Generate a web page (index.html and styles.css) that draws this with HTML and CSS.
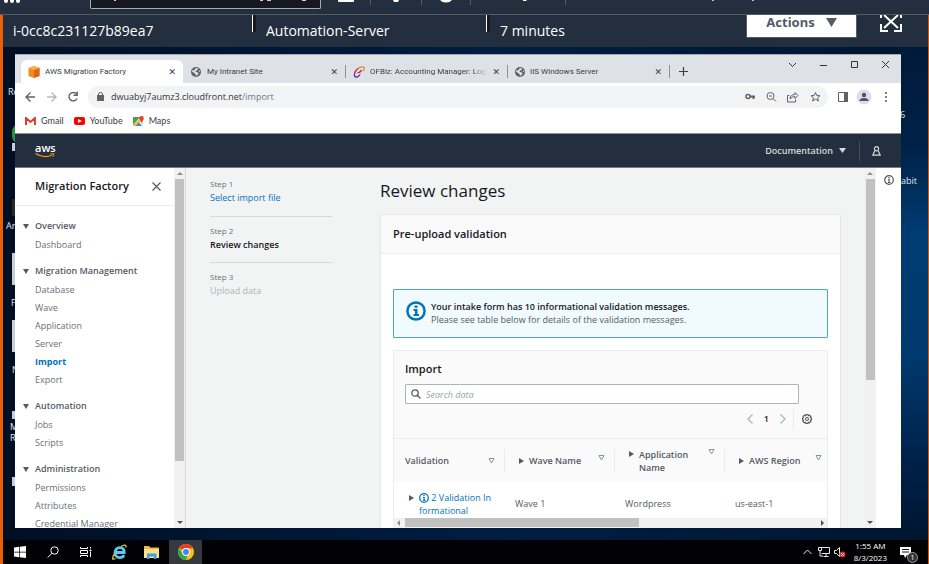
FILE: index.html
```
<!DOCTYPE html>
<html lang="en">
<head>
<meta charset="utf-8">
<title>AWS Migration Factory</title>
<link rel="stylesheet" href="styles.css">
</head>
<body>
<header class="console-nav">
  <svg class="nav-grid" width="18" height="4" viewBox="0 0 18 4"><path fill="#fff" d="M1 0h4v1a2 2 0 0 1-4 0zM7 0h4v1a2 2 0 0 1-4 0zM13 0h4v1a2 2 0 0 1-4 0z"/></svg>
  <div class="nav-search"><svg width="230" height="3" viewBox="0 0 230 3"><path fill="#c9d0d6" d="M23 0h2v1h-2zM169 0h3v1h-3zM176 0h4v1h-4zM211 0h4v1h-4z"/></svg></div>
  <svg class="nav-tools" width="240" height="14" viewBox="0 0 240 14"><path stroke="#545b64" d="M38.500 0v5M89.500 0v5M138.500 0v5M233.500 0v5"/><path fill="#fff" d="M6 0h16v1q0 1-1 1H7q-1 0-1-1zM61 0h6l-1 2h-4zM108 0h12q-2 2.500-6 2.500T108 0zM191 0h4l-1 1h-3z"/></svg>
  <svg class="nav-region" width="60" height="2" viewBox="0 0 60 2"><path fill="#b8c0c8" d="M2 0h2v1H2zM42 0h2v1h-2z"/></svg>
</header>
<main class="session">
  <section class="instance-bar">
    <div class="fact">i-0cc8c231127b89ea7</div>
    <div class="fact ruled">Automation-Server</div>
    <div class="fact ruled">7 minutes</div>
    <button class="actions">Actions <svg width="11" height="9" viewBox="0 0 11 9"><path fill="#545b64" d="M0 0h11L5.500 9z"/></svg></button>
    <button class="expand" aria-label="Full screen"><svg width="22" height="17" viewBox="0 0 22 17"><g stroke="#fff" stroke-width="2" fill="none"><path d="M4 0l14 13M18 0L4 13"/><path d="M1 0v3M21 0v3M1 9v7h7M21 9v7h-7"/></g></svg></button>
  </section>
  <section class="desktop">
    <div class="shortcut s1">Re</div><div class="shortcut s2">Ar</div><div class="shortcut s3">F</div><div class="shortcut s4">N</div><div class="shortcut s5">M<br>R</div>
    <i class="tile t0"></i><i class="tile t1"></i><i class="tile t2"></i><i class="tile t3"></i><i class="tile t4"></i><i class="tile t5"></i><i class="tile t6"></i>
    <div class="shortcut r1">6</div><div class="shortcut r2">abit</div>
    <div class="window">
      <div class="tabs">
        <div class="tab active"><svg width="12" height="12" viewBox="0 0 12 12"><path fill="#f58a1f" d="M6 0l5.500 2v8L6 12 .5 10V2z"/><path fill="#fbb04c" d="M6 0l5.500 2L6 4 .5 2z"/><path fill="#e0661b" d="M6 4l5.500-2v8L6 12z"/></svg><span>AWS Migration Factory</span><button aria-label="Close tab">✕</button></div>
        <div class="tab second"><svg width="10" height="10" viewBox="0 0 10 10"><circle cx="5" cy="5" r="5" fill="#5f6368"/><path fill="#dee1e6" d="M5 1l2 .3-.5 1.700-2 1 .5 1 2 .5.500 1.500L5 9 4.500 7 1 4.500 1.500 3l1.500.5zM8.500 3L9 5 7.500 4.500z"/></svg><span>My Intranet Site</span><button aria-label="Close tab">✕</button></div>
        <div class="tab ruled-tab"><svg width="12" height="12" viewBox="0 0 12 12" fill="none" stroke-width="1.300"><path stroke="#e8862e" d="M5 2.500Q8 0 11 1.200M11 1q.8 2-1 4"/><path stroke="#c32148" d="M5 2.500Q2 4.500 1.500 8M4.500 6.500q3 .5 4-2.500"/><path stroke="#5b2a86" d="M1.500 8q-.5 3.500 2.500 3 2-.5 3-2.500"/></svg><span class="fade">OFBiz: Accounting Manager: Log</span><button aria-label="Close tab">✕</button></div>
        <div class="tab ruled-tab"><svg width="10" height="10" viewBox="0 0 10 10"><circle cx="5" cy="5" r="5" fill="#5f6368"/><path fill="#dee1e6" d="M5 1l2 .3-.5 1.700-2 1 .5 1 2 .5.500 1.500L5 9 4.500 7 1 4.500 1.500 3l1.500.5zM8.500 3L9 5 7.500 4.500z"/></svg><span>IIS Windows Server</span><button aria-label="Close tab">✕</button></div>
        <div class="new-tab"><svg width="9" height="9" viewBox="0 0 9 9"><path stroke="#3c4043" stroke-width="1.200" d="M4.500 0v9M0 4.500h9"/></svg></div>
        <svg class="win-buttons" width="102" height="10" viewBox="0 0 102 10" fill="none" stroke="#333"><path d="M1 3l3.500 3.500L8 3M32 5.500h7M63.500 1.500h6v6h-6zM94 1l7 7M101 1l-7 7"/></svg>
      </div>
      <div class="toolbar">
        <svg width="56" height="12" viewBox="0 0 56 12" fill="none" stroke="#5f6368" stroke-width="1.400"><path d="M10 6H1M5.500 1.500L1 6l4.500 4.500"/><path stroke="#b5b8bb" d="M22 6h9M26.500 1.500L31 6l-4.500 4.500"/><path d="M51.500 3A4.200 4.200 0 1 0 52 7.500M52.200 .5v3.700h-3.700"/></svg>
        <div class="omnibox">
          <svg width="7" height="9" viewBox="0 0 7 9"><path fill="#5f6368" d="M0 3h7v6H0z"/><path fill="none" stroke="#5f6368" d="M1.500 3.500V2a2 1.500 0 0 1 4 0v1.500"/></svg>
          <span class="url">dwuabyj7aumz3.cloudfront.net<i>/import</i></span>
          <svg width="76" height="12" viewBox="0 0 76 12" fill="none" stroke="#5f6368"><circle cx="3" cy="5.500" r="2" stroke-width="1.500"/><path stroke-width="2" d="M5 5.500h5M8.500 5v3"/><circle cx="25.500" cy="5" r="3.500"/><path d="M28 7.500l3 3M24 5h3M44.500 4.500h-2v6.500h8V8.500M45 8c0-3 2-4.500 5-4.500V1.500L53 4.500l-3 3v-2q-3 0-5 2.500z"/><path d="M70.500 1.500l1.300 3 3.200.2-2.500 2.100.9 3.200-2.900-1.800L67.600 10l.9-3.200L66 4.700l3.200-.2z"/></svg>
        </div>
        <svg width="52" height="16" viewBox="0 0 52 16"><path fill="none" stroke="#5f6368" d="M.5 3.500h9v9h-9z"/><path fill="#5f6368" d="M6 3h4v10H6z"/><circle cx="26" cy="8" r="7.500" fill="#dfdbe7"/><circle cx="26" cy="6" r="2.200" fill="#4d5270"/><path fill="#4d5270" d="M21.500 12q0-3 4.500-3t4.500 3z"/><g fill="#5f6368"><circle cx="48" cy="4" r="1.100"/><circle cx="48" cy="8" r="1.100"/><circle cx="48" cy="12" r="1.100"/></g></svg>
      </div>
      <nav class="bookmarks">
        <a href="#"><svg width="11" height="8" viewBox="0 0 11 8"><path fill="none" stroke="#d9402f" stroke-width="2" d="M1 8V1l4.500 4L10 1v7"/></svg>Gmail</a>
        <a href="#"><svg width="11" height="8" viewBox="0 0 11 8"><rect width="11" height="8" rx="2" fill="#f00"/><path fill="#fff" d="M4 2l4 2-4 2z"/></svg>YouTube</a>
        <a href="#"><svg width="11" height="10" viewBox="0 0 11 10"><path fill="#34a853" d="M0 1h7L0 9z"/><path fill="#4285f4" d="M2 10l4-4 3 4z"/><path fill="#fbbc04" d="M0 9l6-6 1 2-5 5H0z"/><path fill="#dadce0" d="M7 5h3v5z"/><path fill="#ea4335" d="M8.500 0A2.300 2.300 0 0 1 10.500 3.500L8.500 7 6.500 3.500A2.300 2.300 0 0 1 8.500 0z"/></svg>Maps</a>
      </nav>
      <header class="aws-header">
        <a class="logo" href="#"><span>aws</span><svg width="20" height="5" viewBox="0 0 20 5" fill="none" stroke="#f90"><path stroke-width="1.300" d="M.5.500Q9 6 17 2"/><path d="M15.500.8h3.500q0 2-1.500 3.200"/></svg></a>
        <button class="docs">Documentation <svg width="7" height="5" viewBox="0 0 7 5"><path fill="#d5dbdb" d="M0 0h7L3.500 5z"/></svg></button>
        <button class="user" aria-label="User"><svg width="9" height="10" viewBox="0 0 9 10" fill="none" stroke="#d5dbdb" stroke-width="1.200"><circle cx="4.500" cy="2.800" r="2.100"/><path d="M2.800 4.800L.8 9.200h7.400l-2-4.400"/></svg></button>
      </header>
      <div class="app">
        <aside class="side">
          <div class="side-title"><h2>Migration Factory</h2><button aria-label="Close navigation"><svg width="9" height="9" viewBox="0 0 9 9"><path stroke="#545b64" stroke-width="1.200" d="M.5.500l8 8M8.500.500l-8 8"/></svg></button></div>
          <nav>
            <section><h3>Overview</h3><a href="#">Dashboard</a></section>
            <section><h3>Migration Management</h3><a href="#">Database</a><a href="#">Wave</a><a href="#">Application</a><a href="#">Server</a><a href="#" class="current">Import</a><a href="#">Export</a></section>
            <section><h3>Automation</h3><a href="#">Jobs</a><a href="#">Scripts</a></section>
            <section><h3>Administration</h3><a href="#">Permissions</a><a href="#">Attributes</a><a href="#">Credential Manager</a></section>
          </nav>
        </aside>
        <div class="vbar side-bar"><i class="up"></i><b></b><i class="down"></i></div>
        <div class="content">
          <ol class="steps">
            <li><small>Step 1</small><a href="#">Select import file</a></li>
            <li><small>Step 2</small><strong>Review changes</strong></li>
            <li><small>Step 3</small><span>Upload data</span></li>
          </ol>
          <div class="review">
            <h1>Review changes</h1>
            <section class="panel">
              <h2>Pre-upload validation</h2>
              <div class="panel-body">
                <div class="alert"><svg width="20" height="20" viewBox="0 0 20 20"><circle cx="10" cy="10" r="8.600" fill="none" stroke="#0073bb" stroke-width="2.500"/><path fill="#0073bb" d="M8.500 4.500h3v2.300h-3zM7.500 8h4v5H13v2H7.500v-2H9v-3H7.500z"/></svg><p><strong>Your intake form has 10 informational validation messages.</strong><br>Please see table below for details of the validation messages.</p></div>
                <section class="import">
                  <div class="import-head">
                    <h2>Import</h2>
                    <label class="search"><svg width="10" height="10" viewBox="0 0 10 10" fill="none" stroke="#545b64" stroke-width="1.300"><circle cx="4" cy="4" r="3.200"/><path d="M6.300 6.300L9.500 9.500"/></svg><input type="text" placeholder="Search data" aria-label="Search data"></label>
                    <div class="pager">
                      <button aria-label="Previous"><svg width="6" height="10" viewBox="0 0 6 10"><path fill="none" stroke="#aab7b8" stroke-width="1.300" d="M5.500.500L1 5l4.500 4.500"/></svg></button>
                      <b>1</b>
                      <button aria-label="Next"><svg width="6" height="10" viewBox="0 0 6 10"><path fill="none" stroke="#aab7b8" stroke-width="1.300" d="M.5.500L5 5 .5 9.500"/></svg></button>
                      <button class="gear" aria-label="Settings"><svg width="10" height="10" viewBox="0 0 10 10" fill="none" stroke="#545b64"><path stroke-width="1.200" d="M4 .6h2l.4 1.100 1.200-.4 1.300 1.400-.5 1.100 1.100.5v1.500l-1.100.5.5 1.100-1.400 1.400-1.100-.5L6 9.400H4l-.5-1.100-1.100.5L1 7.400l.5-1.100L.500 5.800V4.300l1-.5L1 2.700l1.400-1.400 1.100.5z"/><circle cx="5" cy="5" r="1.500"/></svg></button>
                    </div>
                  </div>
                  <div class="grid">
                    <table>
                      <thead><tr>
                        <th><div>Validation<svg class="sort" width="7" height="6" viewBox="0 0 7 6"><path fill="none" stroke="#879596" d="M1 .5h5L3.500 5z"/></svg></div></th>
                        <th><div><i class="play"></i>Wave Name<svg class="sort" width="7" height="6" viewBox="0 0 7 6"><path fill="none" stroke="#879596" d="M1 .5h5L3.500 5z"/></svg></div></th>
                        <th><div class="two"><i class="play"></i>Application Name<svg class="sort" width="7" height="6" viewBox="0 0 7 6"><path fill="none" stroke="#879596" d="M1 .5h5L3.500 5z"/></svg></div></th>
                        <th><div><i class="play"></i>AWS Region<svg class="sort" width="7" height="6" viewBox="0 0 7 6"><path fill="none" stroke="#879596" d="M1 .5h5L3.500 5z"/></svg></div></th>
                      </tr></thead>
                      <tbody><tr>
                        <td><div class="status"><i class="play"></i><a href="#"><svg width="10" height="10" viewBox="0 0 10 10"><circle cx="5" cy="5" r="4.300" fill="none" stroke="#0073bb" stroke-width="1.300"/><path fill="#0073bb" d="M4.300 2h1.400v1.300H4.300zM4 4h1.700v3H6.500v1H4V7h.5V5H4z"/></svg> 2 Validation In<br>formational</a></div></td>
                        <td>Wave 1</td><td>Wordpress</td><td>us-east-1</td>
                      </tr></tbody>
                    </table>
                  </div>
                  <div class="hbar"><i class="left"></i><span><b></b></span><i class="right"></i></div>
                </section>
              </div>
            </section>
          </div>
        </div>
        <div class="vbar main-bar"><i class="up"></i><b></b><i class="down"></i></div>
        <aside class="tools"><button aria-label="Info"><svg width="10" height="10" viewBox="0 0 10 10"><circle cx="5" cy="5" r="4.300" fill="none" stroke="#545b64" stroke-width="1.200"/><path fill="#545b64" d="M4.300 2h1.400v1.300H4.300zM4 4h1.700v3H6.500v1H4V7h.5V5H4z"/></svg></button></aside>
      </div>
    </div>
  </section>
  <footer class="taskbar">
    <button aria-label="Start"><svg width="12" height="12" viewBox="0 0 12 12"><path fill="#fff" d="M0 1.500l5-.7v4.900H0zM5.700.700L12 0v5.700H5.700zM0 6.400h5v4.900l-5-.7zM5.700 6.400H12V12l-6.300-.7z"/></svg></button>
    <button aria-label="Search"><svg width="12" height="12" viewBox="0 0 12 12" fill="none" stroke="#fff"><circle cx="7.500" cy="4.500" r="3.700"/><path d="M5 7.200L.8 11.500"/></svg></button>
    <button aria-label="Task view"><svg width="12" height="12" viewBox="0 0 12 12" fill="none" stroke="#fff"><path d="M.5 1v1.500h7V1M.5 4.500h7v3h-7zM.5 11V9.500h7V11M10.500 1v1.500M10.500 6v5"/><path fill="#fff" d="M10 4h1v1h-1z"/></svg></button>
    <button aria-label="Internet Explorer"><svg width="16" height="16" viewBox="0 0 16 16" fill="none"><path stroke="#5ec8f5" stroke-width="2.800" d="M4.200 8.500h9C13.300 5 11.500 3.600 8.800 3.600 5.800 3.600 4 6 4 8.800c0 3 2 4.800 4.700 4.800 2 0 3.500-.8 4.300-2.500"/><path stroke="#f5c52c" stroke-width="1.300" d="M3.500 10C.5 14 1 16.500 4.500 14.500M10 2.500c3-2 5.500-2 5 1"/></svg></button>
    <button aria-label="File Explorer"><svg width="15" height="13" viewBox="0 0 15 13"><path fill="#e8b74a" d="M0 0h5l1.500 1.500H15V12H0z"/><path fill="#fbe08e" d="M0 3h15v9H0z"/><path fill="#3d9ee0" d="M3 13V7.500h9.500V13h-2.500v-2.500H5.500V13z"/></svg></button>
    <button class="open" aria-label="Chrome"><svg width="16" height="16" viewBox="0 0 16 16"><circle cx="8" cy="8" r="8" fill="#fbc116"/><path fill="#e33b2e" d="M8 8L1 4.100A8 8 0 0 1 15 4.200H8z"/><path fill="#2da94f" d="M8 16A8 8 0 0 1 1 4.100L5 10l4.500 1.500z"/><circle cx="8" cy="8" r="3.900" fill="#fff"/><circle cx="8" cy="8" r="3" fill="#4285f4"/></svg></button>
    <div class="tray">
      <svg width="43" height="12" viewBox="0 0 43 12" fill="none" stroke="#e8e8e8"><path d="M.5 8L4.500 4l4 4M18.500 1.500h8v6h-8M15.500 1.500h3v3h-3zM17 5v5h3M23 8v2M20.500 10.500h5M31.500 4.500h2l3-3v9l-3-3h-2z"/><circle cx="39.500" cy="8.500" r="3" fill="#e02b2b" stroke="none"/><path d="M38.300 7.300l2.400 2.400M40.700 7.300l-2.400 2.400"/></svg>
      <div class="clock">1:55 AM<br>8/3/2023</div>
      <div class="notes"><svg width="11" height="11" viewBox="0 0 11 11"><path fill="#fff" d="M0 0h11v8H7l-2 3-1-3H0z"/><path stroke="#111" d="M2 2.500h7M2 5h7"/></svg><span>1</span></div>
    </div>
  </footer>
</main>
</body>
</html>
```
FILE: styles.css
```
* { box-sizing: border-box; }
body {
  margin: 0; height: 100vh; overflow: hidden; display: flex; flex-direction: column;
  background: #232f3e; color: #545b64; font: 9px/13px "Open Sans", sans-serif;
}
h1, h2, h3, p, ol { margin: 0; padding: 0; }
a { color: inherit; text-decoration: none; }
strong, b { font-weight: 600; }
button { border: 0; padding: 0; margin: 0; background: none; color: inherit; font: inherit; display: flex; align-items: center; justify-content: center; }
svg { display: block; flex: none; }

.console-nav { height: 15px; flex: none; display: flex; align-items: flex-start; border-bottom: 1px solid #545b64; padding-left: 3px; }
.nav-search { width: 231px; height: 9px; margin-left: 69px; background: #16191f; border: 1px solid #a4adb5; border-top: 0; border-radius: 0 0 2px 2px; }
.nav-tools { margin-left: 11px; }
.nav-region { margin-left: 138px; }

.session { flex: 1; min-height: 0; display: flex; flex-direction: column; border-left: 3px solid #eb5f07; border-right: 1px solid #d4570a; }
.instance-bar { height: 32px; flex: none; display: grid; grid-template-columns: 249fr 234fr 260fr 111px 71px; color: #fff; }
.fact { font: 500 14px/32px "Open Sans", sans-serif; padding-left: 10px; }
.ruled { padding-left: 14px; background: linear-gradient(90deg, #fff 1px, #16191f 1px) 0 0 / 4px 17px no-repeat; }
.actions { height: 23px; gap: 11px; background: #fff; border: 1px solid #545b64; border-top: 0; color: #545b64; font: 700 13px/16px "Noto Sans", sans-serif; padding-bottom: 8px; }
.expand { align-items: flex-start; padding-right: 4px; }

.desktop {
  flex: 1; min-height: 0; position: relative; display: flex; padding: 7px 27px 12px 12px;
  background:
    linear-gradient(#001a3a, #002147 20%, #003c72 38%, #003a6e 62%, #002048 85%, #00152f) 100% 0 / 28px 100% no-repeat,
    linear-gradient(90deg, #000f24, #001d42 55%, #00162f);
}
.shortcut { position: absolute; color: #e4e8ec; font: 9px/11px "Open Sans", sans-serif; }
.s1 { left: 5px; top: 39px; } .s2 { left: 3px; top: 173px; } .s3 { left: 8px; top: 250px; } .s4 { left: 9px; top: 317px; } .s5 { left: 7px; top: 374px; }
.r1 { left: 897px; top: 62px; } .r2 { left: 898px; top: 128px; }
.tile { position: absolute; left: 9px; width: 8px; height: 12px; background: #c9ced6; }
.t0 { top: 77px; height: 20px; border-radius: 8px 0 0 8px; background: #28943c; } .t1 { top: 96px; height: 8px; } .t2 { top: 152px; height: 17px; background: #2b2523; } .t3 { top: 206px; height: 32px; } .t4 { top: 273px; height: 32px; } .t5 { top: 364px; height: 8px; } .t6 { top: 430px; height: 9px; }

.window { position: relative; flex: 1; min-width: 0; display: flex; flex-direction: column; background: #fff; overflow: hidden; }
.tabs { height: 29px; flex: none; display: flex; align-items: flex-end; background: #dee1e6; border-top: 1px solid #a5a8ad; font: 8px/22px Roboto, "Open Sans", sans-serif; color: #3c4043; padding-left: 6px; }
.tab { display: flex; align-items: center; width: 162px; height: 23px; padding: 0 7px 0 8px; gap: 5px; }
.tab span { flex: 1; white-space: nowrap; overflow: hidden; }
.tab button { font: 9px/12px "DejaVu Sans", sans-serif; color: #3c4043; }
.active { background: #fff; border-radius: 6px 6px 0 0; padding-left: 7px; }
.second { gap: 6px; }
.ruled-tab { background: linear-gradient(#8e9196, #8e9196) 0 50% / 1px 13px no-repeat; }
.fade { mask-image: linear-gradient(90deg, #000 88%, transparent); }
.new-tab { height: 23px; padding: 7px 10px; background: linear-gradient(#8e9196, #8e9196) 0 50% / 1px 13px no-repeat; }
.win-buttons { align-self: flex-start; margin: 5px 11px 0 auto; }
.toolbar { height: 27px; flex: none; display: flex; align-items: center; padding: 0 11px 0 10px; }
.omnibox { flex: 1; margin: 0 10px 0 7px; height: 22px; border-radius: 11px; background: #f1f3f4; display: flex; align-items: center; gap: 7px; padding: 0 7px 0 9px; font: 9px/20px "Open Sans", sans-serif; color: #333639; }
.url { flex: 1; }
.url i { font-style: normal; color: #74787c; }
.bookmarks { height: 24px; flex: none; display: flex; align-items: center; gap: 10px; padding: 0 10px 2px; border-bottom: 1px solid #8d9299; font: 9px/16px Lato, "Open Sans", sans-serif; }
.bookmarks a { display: flex; align-items: center; gap: 5px; color: #3c4043; }

.aws-header { height: 34px; flex: none; display: flex; align-items: center; background: #232f3e; border-bottom: 1px solid #737b85; color: #d5dbdb; padding-left: 20px; }
.logo { font: 600 11px/10px "Open Sans", sans-serif; color: #fff; }
.logo span { display: block; }
.docs { margin-left: auto; gap: 6px; font-weight: 600; padding-right: 13px; }
.user { width: 42px; height: 20px; border-left: 1px solid #414d5c; padding-right: 9px; }

.app { flex: 1; min-height: 0; display: flex; }
.side { width: 159px; flex: none; overflow: hidden; }
.side-title { height: 38px; display: flex; align-items: center; justify-content: space-between; padding: 0 13px 1px 20px; border-bottom: 1px solid #eaeded; }
.side-title h2 { font: 600 11px/16px "Open Sans", sans-serif; color: #16191f; }
.side nav { display: flex; flex-direction: column; gap: 7px; padding: 10px 0 0 20px; }
.side h3 { font: 600 9px/20px "Open Sans", sans-serif; position: relative; }
.side h3::before { content: ""; position: absolute; left: -12px; top: 8px; border: 3px solid transparent; border-top: 5px solid #545b64; border-bottom: 0; }
.side nav a { display: block; line-height: 18px; white-space: nowrap; color: #687078; }
.side nav .current { color: #0073bb; font-weight: 700; }

.vbar { width: 12px; flex: none; background: #f1f1f1; display: flex; flex-direction: column; align-items: center; padding: 4px 0; }
.vbar b { width: 9px; background: #c1c1c1; margin-top: 4px; }
.side-bar b { height: 80%; } .main-bar b { height: 57%; }
.side-bar { border-right: 1px solid #d5dbdb; }
.up, .down, .left, .right { width: 0; height: 0; border: 3px solid transparent; flex: none; }
.up { border-top: 0; border-bottom-color: #8f8f8f; } .down { border-bottom: 0; border-top-color: #505050; margin-top: auto; }
.left { border-left: 0; border-right-color: #8f8f8f; } .right { border-right: 0; border-left-color: #505050; }

.content { flex: 1; min-width: 0; display: flex; background: #f2f3f3; padding: 0 23px 0 24px; gap: 48px; }
.steps { width: 122px; flex: none; list-style: none; padding-top: 9px; }
.steps li { height: 46px; line-height: 14px; }
.steps li + li { border-top: 1px solid #d5dbdb; padding-top: 7px; margin-top: -7px; height: 53px; }
.steps small { display: block; font-size: 8px; color: #687078; }
.steps a { color: #0073bb; } .steps strong { color: #16191f; } .steps span { color: #aab7b8; }
.review { flex: 1; min-width: 0; display: flex; flex-direction: column; }
h1 { font: 400 17px/24px "Open Sans", sans-serif; color: #16191f; padding: 11px 0; }
.panel { flex: 1; min-height: 0; display: flex; flex-direction: column; background: #fff; border: 1px solid #e3e7e8; border-bottom: 0; }
.panel > h2 { flex: none; background: #fafafa; border-bottom: 1px solid #eaeded; font: 600 11px/38px "Open Sans", sans-serif; color: #16191f; padding-left: 12px; }
.panel-body { flex: 1; min-height: 0; display: flex; flex-direction: column; gap: 12px; padding: 35px 12px 0; }
.alert { height: 49px; flex: none; display: flex; align-items: center; gap: 5px; padding: 0 12px 2px; background: #f1faff; border: 1px solid #4fa3d6; border-radius: 1px; }
.alert svg { margin-bottom: 4px; }
.alert strong { color: #16191f; }
.import { flex: 1; min-height: 0; display: flex; flex-direction: column; border: 1px solid #eaeded; border-bottom: 0; }
.import-head { flex: none; background: #fafafa; padding: 10px 11px 0; border-bottom: 1px solid #eaeded; }
.import-head h2 { font: 600 11px/16px "Open Sans", sans-serif; color: #16191f; }
.search { display: flex; align-items: center; gap: 5px; height: 20px; margin: 7px 17px 0 0; padding: 0 5px; background: #fff; border: 1px solid #aab7b8; border-radius: 1px; }
.search input { flex: 1; border: 0; outline: 0; padding: 0; background: none; font: inherit; }
.search input::placeholder { color: #95a3a5; font-style: italic; }
.pager { height: 34px; display: flex; align-items: center; justify-content: flex-end; gap: 7px; padding-bottom: 5px; }
.pager b { color: #16191f; padding: 0 4px; }
.gear { height: 20px; border-left: 1px solid #eaeded; padding: 0 4px 0 8px; }
.grid { flex: 1; min-height: 0; overflow: hidden; }
table { width: 100%; table-layout: fixed; border-collapse: collapse; }
th { height: 43px; width: 110px; padding: 0; background: #fafafa; text-align: left; font-weight: 600; }
th:last-child { width: auto; }
th div { position: relative; height: 23px; display: flex; align-items: center; padding: 0 20px 0 14px; gap: 5px; border-left: 1px solid #eaeded; }
th:first-child div { padding-left: 11px; border-left: 0; }
th .two { line-height: 13px; padding-right: 30px; }
.two .play { margin-bottom: 13px; }
.sort { position: absolute; right: 9px; top: 6px; }
th:first-child .sort { top: 9px; }
th:last-child .sort { right: 5px; }
.two .sort { top: 0; }
.play { flex: none; width: 0; height: 0; border: 3px solid transparent; border-left: 5px solid #545b64; border-right: 0; }
td { padding: 8px 0 0 11px; height: 35px; }
.status { display: flex; gap: 5px; padding-left: 4px; }
.status .play { margin-top: 4px; }
.status a { color: #0073bb; white-space: nowrap; }
.status svg { display: inline-block; vertical-align: -2px; }
.hbar { height: 10px; flex: none; display: flex; align-items: center; background: #f1f1f1; padding: 0 3px 1px; gap: 5px; }
.hbar span { flex: 1; }
.hbar b { display: block; height: 9px; width: 57%; background: #c1c1c1; }
.tools { width: 25px; flex: none; padding: 7px 8px; }

.taskbar { height: 24px; flex: none; display: flex; background: #020204; color: #fff; }
.taskbar > button { width: 33px; }
.taskbar .open { background: #35383d; margin-left: 1px; }
.tray { margin-left: auto; display: flex; align-items: center; gap: 8px; font: 8px/12px "Open Sans", sans-serif; padding-right: 10px; }
.clock { text-align: center; }
.notes { position: relative; margin-left: 5px; padding-right: 7px; }
.notes span { position: absolute; right: 0; top: 5px; width: 11px; height: 11px; border-radius: 50%; background: #333; border: 1px solid #999; font-size: 7px; line-height: 9px; text-align: center; }
```
